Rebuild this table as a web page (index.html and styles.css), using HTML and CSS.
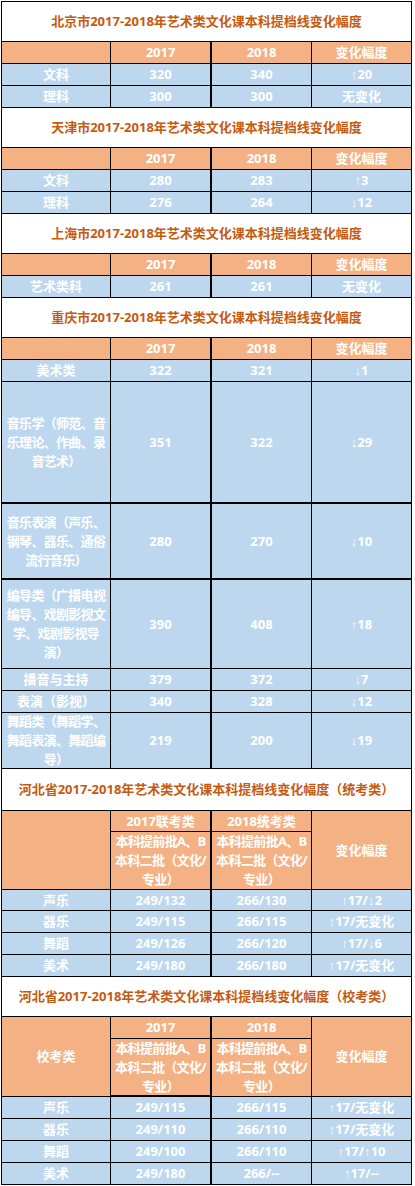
FILE: index.html
```html
<!DOCTYPE html>
<html lang="zh-CN">
<head>
<meta charset="utf-8">
<title>2017-2018年艺术类文化课本科提档线变化幅度</title>
<link rel="stylesheet" href="styles.css">
</head>
<body>
<div class="sheet">
  <!-- 北京 -->
  <div class="c title">北京市2017-2018年艺术类文化课本科提档线变化幅度</div>
  <div class="c h"></div><div class="c h">2017</div><div class="c h c3">2018</div><div class="c h">变化幅度</div>
  <div class="c d">文科</div><div class="c d">320</div><div class="c d c3">340</div><div class="c d">↑20</div>
  <div class="c d">理科</div><div class="c d">300</div><div class="c d c3">300</div><div class="c d">无变化</div>

  <!-- 天津 -->
  <div class="c title">天津市2017-2018年艺术类文化课本科提档线变化幅度</div>
  <div class="c h"></div><div class="c h">2017</div><div class="c h c3">2018</div><div class="c h">变化幅度</div>
  <div class="c d">文科</div><div class="c d">280</div><div class="c d c3">283</div><div class="c d">↑3</div>
  <div class="c d">理科</div><div class="c d">276</div><div class="c d c3">264</div><div class="c d">↓12</div>

  <!-- 上海 -->
  <div class="c title">上海市2017-2018年艺术类文化课本科提档线变化幅度</div>
  <div class="c h"></div><div class="c h">2017</div><div class="c h c3">2018</div><div class="c h">变化幅度</div>
  <div class="c d">艺术类科</div><div class="c d">261</div><div class="c d c3">261</div><div class="c d">无变化</div>

  <!-- 重庆 -->
  <div class="c title">重庆市2017-2018年艺术类文化课本科提档线变化幅度</div>
  <div class="c h"></div><div class="c h">2017</div><div class="c h c3">2018</div><div class="c h">变化幅度</div>
  <div class="c d">美术类</div><div class="c d">322</div><div class="c d c3">321</div><div class="c d">↓1</div>
  <div class="c d wrap tall120">音乐学（师范、音<br>乐理论、作曲、录<br>音艺术）</div><div class="c d">351</div><div class="c d c3">322</div><div class="c d">↓29</div>
  <div class="c d wrap thick tall75">音乐表演（声乐、<br>钢琴、器乐、通俗<br>流行音乐）</div><div class="c d thick">280</div><div class="c d thick c3">270</div><div class="c d thick">↓10</div>
  <div class="c d wrap thick tall89">编导类（广播电视<br>编导、戏剧影视文<br>学、戏剧影视导<br>演）</div><div class="c d thick">390</div><div class="c d thick c3">408</div><div class="c d thick">↑18</div>
  <div class="c d">播音与主持</div><div class="c d">379</div><div class="c d c3">372</div><div class="c d">↓7</div>
  <div class="c d">表演（影视）</div><div class="c d">340</div><div class="c d c3">328</div><div class="c d">↓12</div>
  <div class="c d wrap tall55">舞蹈类（舞蹈学、<br>舞蹈表演、舞蹈编<br>导）</div><div class="c d">219</div><div class="c d c3">200</div><div class="c d">↓19</div>

  <!-- 河北 统考类 -->
  <div class="c title t41">河北省2017-2018年艺术类文化课本科提档线变化幅度（统考类）</div>
  <div class="c h span2"></div><div class="c h r20">2017联考类</div><div class="c h c3 r20">2018统考类</div><div class="c h span2">变化幅度</div>
  <div class="c h wrap tall57">本科提前批A、B<br>本科二批（文化/<br>专业）</div><div class="c h wrap c3">本科提前批A、B<br>本科二批（文化/<br>专业）</div>
  <div class="c d r20">声乐</div><div class="c d r20">249/132</div><div class="c d c3 r20">266/130</div><div class="c d r20">↑17/↓2</div>
  <div class="c d">器乐</div><div class="c d">249/115</div><div class="c d c3">266/115</div><div class="c d">↑17/无变化</div>
  <div class="c d">舞蹈</div><div class="c d">249/126</div><div class="c d c3">266/120</div><div class="c d">↑17/↓6</div>
  <div class="c d">美术</div><div class="c d">249/180</div><div class="c d c3">266/180</div><div class="c d">↑17/无变化</div>

  <!-- 河北 校考类 -->
  <div class="c title">河北省2017-2018年艺术类文化课本科提档线变化幅度（校考类）</div>
  <div class="c h span2">校考类</div><div class="c h">2017</div><div class="c h c3">2018</div><div class="c h span2">变化幅度</div>
  <div class="c h wrap tall56">本科提前批A、B<br>本科二批（文化/<br>专业）</div><div class="c h wrap c3">本科提前批A、B<br>本科二批（文化/<br>专业）</div>
  <div class="c d">声乐</div><div class="c d">249/115</div><div class="c d c3">266/115</div><div class="c d">↑17/无变化</div>
  <div class="c d">器乐</div><div class="c d">249/110</div><div class="c d c3">266/110</div><div class="c d">↑17/无变化</div>
  <div class="c d">舞蹈</div><div class="c d">249/100</div><div class="c d c3">266/110</div><div class="c d">↑17/↑10</div>
  <div class="c d">美术</div><div class="c d">249/180</div><div class="c d c3">266/--</div><div class="c d">↑17/--</div>
</div>
</body>
</html>
```

FILE: styles.css
```css
html, body {
  margin: 0;
  padding: 0;
  background: #ffffff;
}

.sheet {
  margin: 1px 0 0 1px;
  width: max-content;
  display: grid;
  grid-template-columns: 108px 99px 100px 99px;
  column-gap: 1px;
  row-gap: 1px;
  background: #000000;
  border: 1px solid #000000;
  font-family: "Open Sans", "Liberation Sans", "Noto Sans CJK SC", sans-serif;
  font-size: 13px;
  font-weight: bold;
  line-height: 19px;
}

.c {
  box-sizing: border-box;
  display: flex;
  align-items: center;
  justify-content: center;
  text-align: center;
  color: #ffffff;
  min-height: 21px;
  white-space: nowrap;
}

.wrap {
  letter-spacing: -0.7px;
}

.h {
  background: #f4b183;
}

.d {
  background: #bdd7ee;
}

.c3 {
  border-left: 1px solid #000000;
}

.thick {
  border-top: 1px solid #000000;
}

.title {
  grid-column: 1 / -1;
  background: #ffffff;
  color: #c55a11;
  min-height: 39px;
}

.t41 {
  min-height: 41px;
}

.span2 {
  grid-row: span 2;
}

.r20 {
  min-height: 20px;
}

.tall120 {
  min-height: 120px;
}

.tall75 {
  min-height: 75px;
}

.tall89 {
  min-height: 89px;
}

.tall55 {
  height: 55px;
  min-height: 55px;
}

.tall57 {
  min-height: 57px;
}

.tall56 {
  height: 56px;
  min-height: 56px;
}
```
